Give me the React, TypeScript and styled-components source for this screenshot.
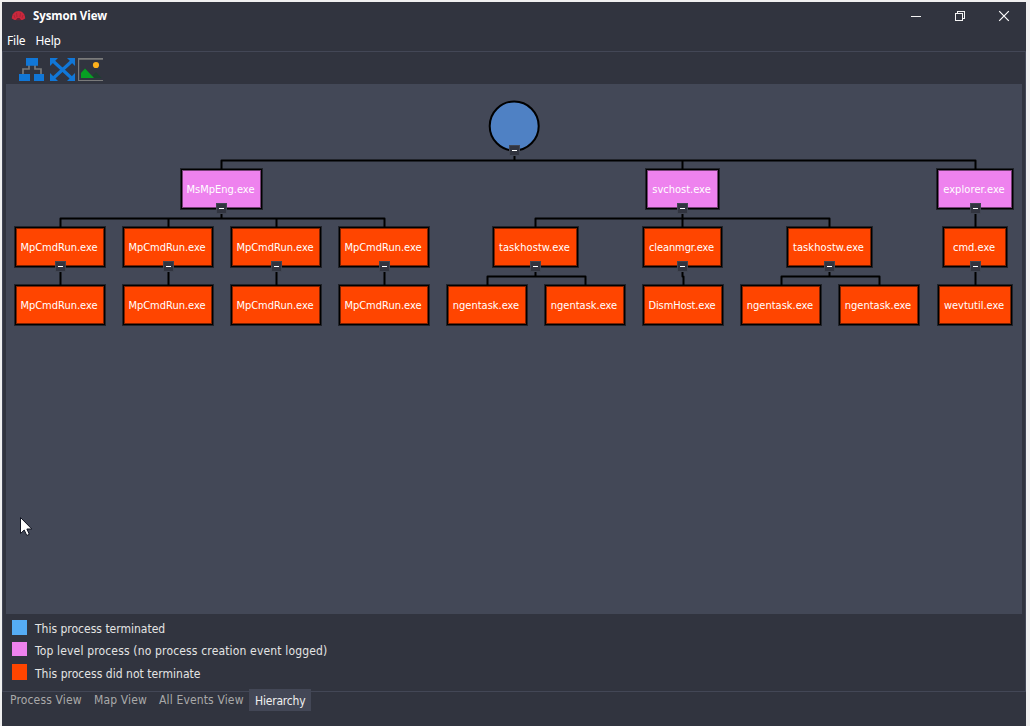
import React from "react";
import styled, { createGlobalStyle } from "styled-components";

const c = {
  bg: "#31343f",
  canvas: "#434857",
  line: "#434756",
  pink: "#ee82ee",
  orange: "#ff4500",
  blue: "#55acf5",
};

const Global = createGlobalStyle`
  body { margin: 0; background: #f0f0f0; }
  * { box-sizing: border-box; }
`;

const Desktop = styled.div`
  width: 1030px;
  height: 726px;
  padding: 2px 4px 0 2px;
  background: #f0f0f0;
  overflow: hidden;
`;

const Window = styled.div`
  height: 724px;
  display: flex;
  flex-direction: column;
  background: ${c.bg};
  color: #fff;
  font-family: "DejaVu Sans Condensed", "DejaVu Sans", sans-serif;
  font-stretch: condensed;
  white-space: nowrap;
`;

const TitleBar = styled.header`
  height: 28px;
  display: flex;
  align-items: center;
  padding-left: 9px;
`;

const Title = styled.div`
  flex: 1;
  margin-left: 7px;
  font: 700 11.5px/28px "Open Sans", sans-serif;
  letter-spacing: -0.1px;
`;

const Controls = styled.div`
  display: flex;
  svg { display: block; }
`;

const ControlButton = styled.div`
  width: 44px;
  height: 28px;
`;

const MenuBar = styled.nav`
  height: 21px;
  display: flex;
  gap: 10px;
  padding-left: 5px;
  font: 400 12px/22px "Noto Sans", sans-serif;
  letter-spacing: -0.2px;
`;

const Page = styled.main`
  height: 641px;
  border: 1px solid ${c.line};
  padding: 0 3px;
  display: flex;
  flex-direction: column;
`;

const Toolbar = styled.div`
  height: 32px;
  display: flex;
  gap: 3px;
  padding: 6px 0 0 13px;
`;

const Canvas = styled.div`
  position: relative;
  height: 530px;
  background: ${c.canvas};
`;

const Links = styled.svg`
  position: absolute;
  inset: 0;
`;

const Node = styled.div<{ $x: number; $y: number; $w: number; $top?: boolean }>`
  position: absolute;
  left: ${(p) => p.$x}px;
  top: ${(p) => p.$y}px;
  width: ${(p) => p.$w}px;
  height: 40px;
  border: 1px solid #000;
  box-shadow: 0 0 0 1px rgba(0, 0, 0, 0.5), inset 0 0 0 1px rgba(0, 0, 0, 0.5);
  background: ${(p) => (p.$top ? c.pink : c.orange)};
  font-size: 11px;
  line-height: 40px;
  padding-right: 2px;
  display: flex;
  justify-content: center;
`;

const NodeText = styled.span<{ $spacing: number }>`
  letter-spacing: ${(p) => p.$spacing}px;
`;

const Toggle = styled.div<{ $x: number; $y: number }>`
  position: absolute;
  left: ${(p) => p.$x}px;
  top: ${(p) => p.$y}px;
  width: 11px;
  height: 11px;
  border: 1px solid #414653;
  background: ${c.bg};
  padding: 4px 2px;
  &::after {
    content: "";
    display: block;
    height: 1px;
    background: #fff;
  }
`;

const Pointer = styled.svg`
  position: absolute;
  left: 14px;
  top: 433px;
`;

const Legend = styled.div`
  padding: 6px 0 0 6px;
  display: flex;
  flex-direction: column;
`;

const LegendRow = styled.div`
  height: 22px;
  display: flex;
  align-items: flex-start;
  gap: 8px;
  font-size: 12px;
  line-height: 18px;
  color: #e4e4e4;
`;

const Swatch = styled.i<{ $color: string; $h: number }>`
  width: 15px;
  height: ${(p) => p.$h}px;
  background: ${(p) => p.$color};
`;

const LegendText = styled.span<{ $spacing: number; $drop?: number }>`
  letter-spacing: ${(p) => p.$spacing}px;
  padding-top: ${(p) => p.$drop ?? 0}px;
`;

const Tabs = styled.div`
  display: flex;
  padding-left: 2px;
  margin-top: -3px;
`;

const Tab = styled.div<{ $active?: boolean; $w: number }>`
  width: ${(p) => p.$w}px;
  height: 22px;
  padding-left: 6px;
  font-size: 12px;
  line-height: ${(p) => (p.$active ? 24 : 22)}px;
  letter-spacing: ${(p) => (p.$active ? -0.2 : 0.15)}px;
  color: ${(p) => (p.$active ? "#f0f0f0" : "#a9a9a9")};
  background: ${(p) => (p.$active ? c.line : "transparent")};
`;

type Item = { t: string; x: number; w: number; row: number; cx?: number; top?: boolean };

const items: Item[] = [
  { t: "MsMpEng.exe", x: 181, w: 81, row: 0, cx: 221, top: true },
  { t: "svchost.exe", x: 646, w: 73, row: 0, cx: 682, top: true },
  { t: "explorer.exe", x: 937, w: 76, row: 0, cx: 975, top: true },
  ...[0, 1, 2, 3].flatMap((i) => [
    { t: "MpCmdRun.exe", x: 15 + 108 * i, w: 90, row: 1, cx: 60 + 108 * i },
    { t: "MpCmdRun.exe", x: 15 + 108 * i, w: 90, row: 2 },
  ]),
  { t: "taskhostw.exe", x: 493, w: 85, row: 1, cx: 535 },
  { t: "cleanmgr.exe", x: 643, w: 79, row: 1, cx: 682 },
  { t: "taskhostw.exe", x: 787, w: 85, row: 1, cx: 829 },
  { t: "cmd.exe", x: 943, w: 64, row: 1, cx: 975 },
  { t: "ngentask.exe", x: 447, w: 80, row: 2 },
  { t: "ngentask.exe", x: 545, w: 80, row: 2 },
  { t: "DismHost.exe", x: 643, w: 80, row: 2 },
  { t: "ngentask.exe", x: 741, w: 80, row: 2 },
  { t: "ngentask.exe", x: 839, w: 80, row: 2 },
  { t: "wevtutil.exe", x: 938, w: 74, row: 2 },
];

const spacing: Record<string, number> = {
  "taskhostw.exe": 0.08,
  "explorer.exe": 0.1,
  "cleanmgr.exe": -0.1,
  "DismHost.exe": -0.1,
};

const links = [
  "M514.5 156V160.5M221.5 169V160.5H975.5V169M682.5 160.5V169",
  "M221.5 214V218.5M60.5 227V218.5H384.5V227M168.5 218.5V227M276.5 218.5V227",
  "M682.5 214V227M535.5 227V218.5H829.5V227M975.5 214V227",
  "M60.5 272V285M168.5 272V285M276.5 272V285M384.5 272V285M975.5 272V285",
  "M535.5 272V276.5M487.5 285V276.5H585.5V285",
  "M829.5 272V276.5M781.5 285V276.5H879.5V285",
  "M682.5 272V276.5H683.5V285",
].join("");

export default function App() {
  return (
    <>
      <Global />
      <Desktop>
        <Window>
          <TitleBar>
            <svg width="15" height="12" viewBox="0 0 15 12">
              <path d="M.8 8.500C.8 4.500 3.500 1 7.500 1S14.200 4.500 14.200 8.500L11.500 10H3.500Z" fill="#c9283c" />
              <path d="M4 8L3 5M6 7L5.500 3M9 7L9.500 3M11 8L12 5" stroke="#9c2036" strokeWidth=".7" fill="none" />
              <path d="M4.500 10.200L6.500 8H8.500L10.500 10.200Z" fill="#6b2434" />
            </svg>
            <Title>Sysmon View</Title>
            <Controls>
              <ControlButton>
                <svg width="44" height="28" shapeRendering="crispEdges">
                  <path d="M17 14.500H27" stroke="#f4f4f4" />
                </svg>
              </ControlButton>
              <ControlButton>
                <svg width="44" height="28" fill="none" stroke="#f4f4f4" shapeRendering="crispEdges">
                  <path d="M17.500 11.500H24.500V18.500H17.500ZM19.500 11V9.500H26.500V16.500H25" />
                </svg>
              </ControlButton>
              <ControlButton>
                <svg width="44" height="28" fill="none" stroke="#fff" strokeWidth="1.2">
                  <path d="M17.200 9.200L26.800 18.800M26.800 9.200L17.200 18.800" />
                </svg>
              </ControlButton>
            </Controls>
          </TitleBar>
          <MenuBar>
            <span>File</span>
            <span>Help</span>
          </MenuBar>
          <Page>
            <Toolbar>
              <svg width="28" height="24" viewBox="0 0 28 24">
                <path d="M10 7V11H4V16M16 7V11H22V16" fill="none" stroke="#7a7a7a" strokeWidth="1.700" />
                <path d="M7 0H19V7.700H7ZM0 16H11V23H0ZM15 16H25V23H15Z" fill="#1177d7" />
              </svg>
              <svg width="25" height="24" viewBox="0 0 25 24">
                <path d="M3 3L22 20.500M22 3L3 20.500" stroke="#1177d7" strokeWidth="3.200" />
                <path d="M0 0H8L0 8ZM17 0H25V8ZM0 23V15L8 23ZM25 23V15L17 23Z" fill="#1177d7" />
              </svg>
              <svg width="25" height="24" viewBox="0 0 25 24">
                <path d="M0 0H25V1.700H1.200V22H25V23H0Z" fill="#7a7a7a" />
                <path d="M15 17L18 14L23.500 20H15Z" fill="#1d4030" />
                <path d="M3 20V15L7 10.500L16 20Z" fill="#07a023" />
                <circle cx="18" cy="7" r="3.100" fill="#fcb01c" />
              </svg>
            </Toolbar>
            <Canvas>
              <Links width="1016" height="530" viewBox="6 84 1016 530">
                <path d={links} fill="none" stroke="#000" strokeWidth="2" strokeLinejoin="round" />
                <circle cx="514.200" cy="126" r="24.500" fill="#4f81c4" stroke="#000" strokeWidth="2" />
              </Links>
              {items.map((n, i) => (
                <Node key={i} $x={n.x - 6} $y={85 + 58 * n.row} $w={n.w} $top={n.top}>
                  <NodeText $spacing={spacing[n.t] ?? 0}>{n.t}</NodeText>
                </Node>
              ))}
              {items
                .filter((n) => n.cx)
                .map((n) => (
                  <Toggle key={n.cx! + n.row * 2000} $x={n.cx! - 11} $y={119 + 58 * n.row} />
                ))}
              <Toggle $x={503} $y={61} />
              <Pointer width="13" height="20" viewBox="0 0 13 20">
                <path
                  d="M.500 .500V16.500L4.200 13L6.800 18.500L9.300 17.300L6.900 12H11.800Z"
                  fill="#fff"
                  stroke="#111522"
                />
              </Pointer>
            </Canvas>
            <Legend>
              <LegendRow>
                <Swatch $color={c.blue} $h={15} />
                <LegendText $spacing={0}>This process terminated</LegendText>
              </LegendRow>
              <LegendRow>
                <Swatch $color={c.pink} $h={14} />
                <LegendText $spacing={0.16}>Top level process (no process creation event logged)</LegendText>
              </LegendRow>
              <LegendRow>
                <Swatch $color={c.orange} $h={16} />
                <LegendText $spacing={0.03} $drop={1}>This process did not terminate</LegendText>
              </LegendRow>
            </Legend>
          </Page>
          <Tabs>
            <Tab $w={84}>Process View</Tab>
            <Tab $w={65}>Map View</Tab>
            <Tab $w={96}>All Events View</Tab>
            <Tab $w={62} $active>Hierarchy</Tab>
          </Tabs>
        </Window>
      </Desktop>
    </>
  );
}
